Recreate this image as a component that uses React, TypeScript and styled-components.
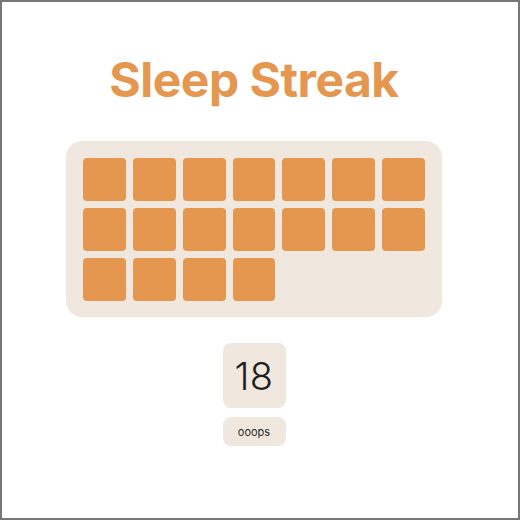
import styled, { createGlobalStyle } from "styled-components";

const GlobalStyle = createGlobalStyle`
  html, body {
    margin: 0;
    padding: 0;
    background: #fff;
  }
  body {
    font-family: Inter, "Noto Sans", sans-serif;
  }
`;

const TOTAL_DAYS = 18;

export default function App() {
  const days = Array.from({ length: TOTAL_DAYS }, (_, i) => i);

  return (
    <>
      <GlobalStyle />
      <Frame>
        <Column>
          <Title>Sleep Streak</Title>
          <Board>
            {days.map((d) => (
              <Day key={d} />
            ))}
          </Board>
          <Count>{TOTAL_DAYS}</Count>
          <OopsButton>ooops</OopsButton>
        </Column>
      </Frame>
    </>
  );
}

const Frame = styled.div`
  width: 520px;
  height: 520px;
  box-sizing: border-box;
  border: 2px solid #767676;
  background: #fff;
`;

const Column = styled.div`
  display: flex;
  flex-direction: column;
  align-items: center;
  padding-top: 54px;
  padding-right: 12px;
`;

const Title = styled.h1`
  margin: 0;
  font-size: 48px;
  line-height: 48px;
  font-weight: 700;
  color: #e5974f;
  letter-spacing: -0.5px;
`;

const Board = styled.div`
  margin-top: 37px;
  width: 376px;
  box-sizing: border-box;
  padding: 17px 17px 16px;
  background: #f0e8df;
  border-radius: 16px;
  display: grid;
  grid-template-columns: repeat(7, 1fr);
  grid-auto-rows: 43px;
  gap: 7px;
`;

const Day = styled.div`
  background: #e5974f;
  border-radius: 4px;
`;

const Count = styled.div`
  margin-top: 26px;
  width: 63px;
  height: 65px;
  display: flex;
  align-items: center;
  justify-content: center;
  background: #f0e8df;
  border-radius: 8px;
  font-size: 38px;
  font-weight: 300;
  letter-spacing: 0.5px;
  line-height: 1;
  color: #1f1f1f;
`;

const OopsButton = styled.button`
  margin-top: 9px;
  width: 63px;
  height: 29px;
  border: none;
  padding: 0;
  background: #f0e8df;
  border-radius: 8px;
  font-family: Inter, "Noto Sans", sans-serif;
  font-size: 11px;
  color: #2a2a2a;
  cursor: pointer;
`;
